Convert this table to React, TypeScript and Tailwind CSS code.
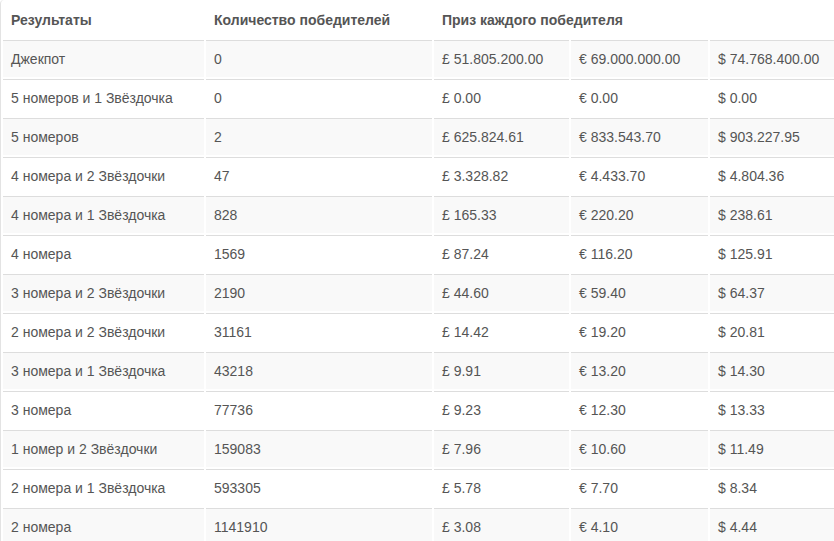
const ROWS = [
  ['Джекпот', '0', '£ 51.805.200.00', '€ 69.000.000.00', '$ 74.768.400.00'],
  ['5 номеров и 1 Звёздочка', '0', '£ 0.00', '€ 0.00', '$ 0.00'],
  ['5 номеров', '2', '£ 625.824.61', '€ 833.543.70', '$ 903.227.95'],
  ['4 номера и 2 Звёздочки', '47', '£ 3.328.82', '€ 4.433.70', '$ 4.804.36'],
  ['4 номера и 1 Звёздочка', '828', '£ 165.33', '€ 220.20', '$ 238.61'],
  ['4 номера', '1569', '£ 87.24', '€ 116.20', '$ 125.91'],
  ['3 номера и 2 Звёздочки', '2190', '£ 44.60', '€ 59.40', '$ 64.37'],
  ['2 номера и 2 Звёздочки', '31161', '£ 14.42', '€ 19.20', '$ 20.81'],
  ['3 номера и 1 Звёздочка', '43218', '£ 9.91', '€ 13.20', '$ 14.30'],
  ['3 номера', '77736', '£ 9.23', '€ 12.30', '$ 13.33'],
  ['1 номер и 2 Звёздочки', '159083', '£ 7.96', '€ 10.60', '$ 11.49'],
  ['2 номера и 1 Звёздочка', '593305', '£ 5.78', '€ 7.70', '$ 8.34'],
  ['2 номера', '1141910', '£ 3.08', '€ 4.10', '$ 4.44'],
]

export default function App() {
  return (
    <div className="w-[834px] h-[541px] overflow-hidden bg-white font-['Liberation_Sans',Arial,sans-serif] text-[14px] leading-5 text-[#555]">
      <div className="w-[860px] border-l border-[#e3e3e3] rounded-tl-[4px]">
        <table className="table-fixed w-[852px] border-separate border-spacing-[2px]">
          <colgroup>
            <col className="w-[201px]" />
            <col className="w-[226px]" />
            <col className="w-[135px]" />
            <col className="w-[137px]" />
            <col className="w-[141px]" />
          </colgroup>
          <thead>
            <tr>
              <th className="p-2 text-left font-bold">Результаты</th>
              <th className="p-2 text-left font-bold">Количество победителей</th>
              <th colSpan={3} className="p-2 text-left font-bold">Приз каждого победителя</th>
            </tr>
          </thead>
          <tbody>
            {ROWS.map((row, i) => (
              <tr key={i} className={i % 2 === 0 ? 'bg-[#f9f9f9]' : 'bg-white'}>
                {row.map((cell, j) => (
                  <td key={j} className="p-2 border-t border-[#dddddd] whitespace-nowrap">
                    {cell}
                  </td>
                ))}
              </tr>
            ))}
          </tbody>
        </table>
      </div>
    </div>
  )
}
